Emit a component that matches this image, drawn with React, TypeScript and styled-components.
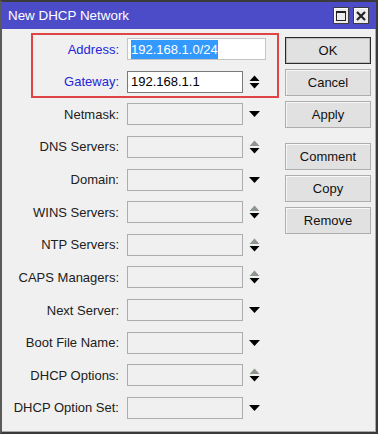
import React from "react";
import styled, { createGlobalStyle } from "styled-components";

const Global = createGlobalStyle`
  html, body { margin: 0; padding: 0; background: #f0f0f0; }
  body { font-family: "Liberation Sans", Arial, sans-serif; }
  * { box-sizing: border-box; }
`;

const Window = styled.div`
  width: 378px;
  height: 434px;
  border: 2px solid #3a3a3a;
  border-left-color: #5a5a5a;
  display: flex;
  flex-direction: column;
  background: #f0f0f0;
  overflow: hidden;
`;

const TitleBar = styled.div`
  height: 27px;
  flex: none;
  background: #4c4cc9;
  display: flex;
  align-items: center;
  padding: 0 7px 0 6px;
`;

const Title = styled.div`
  flex: 1;
  color: #ffffff;
  font-size: 13.4px;
  line-height: 1;
`;

const TitleButtons = styled.div`
  display: flex;
  gap: 4px;
`;

const TitleButton = styled.div`
  width: 16px;
  height: 17px;
  background: #ececec;
  border: 1px solid #3c3c3c;
  box-shadow: inset 1px 1px 0 #ffffff;
  display: flex;
  align-items: center;
  justify-content: center;
`;

const Body = styled.div`
  position: relative;
  flex: 1;
  display: flex;
  align-items: flex-start;
  padding-top: 9px;
  border-right: 1px solid #a8a8a8;
  border-bottom: 1px solid #a8a8a8;
`;

const Form = styled.div`
  display: flex;
  flex-direction: column;
  gap: 10.64px;
`;

const Row = styled.div`
  display: grid;
  grid-template-columns: 125px 116px 23px;
  height: 22px;
  align-items: center;
`;

const Label = styled.div<{ $accent?: boolean }>`
  text-align: right;
  padding-right: 8px;
  font-size: 13px;
  color: ${(p) => (p.$accent ? "#2424d8" : "#202020")};
  white-space: nowrap;
`;

const Field = styled.div<{ $filled?: boolean; $wide?: boolean; $dark?: boolean }>`
  height: 22px;
  grid-column: ${(p) => (p.$wide ? "2 / span 2" : "2")};
  background: ${(p) => (p.$filled ? "#ffffff" : "#f0f0f0")};
  border: 1px solid ${(p) => (p.$dark ? "#7a7a7a" : p.$filled ? "#c4c4c4" : "#adadad")};
  font-size: 13px;
  color: #000;
  display: flex;
  align-items: center;
  padding-left: 3px;
  white-space: nowrap;
  overflow: hidden;
`;

const Selected = styled.span`
  background: #3399ff;
  color: #ffffff;
  padding: 2px 0;
`;

const IconCell = styled.div`
  display: flex;
  align-items: center;
  justify-content: center;
  padding-right: 1px;
`;

const Buttons = styled.div`
  margin-left: 19px;
  margin-top: -1px;
  display: flex;
  flex-direction: column;
  gap: 5px;
  width: 86px;
`;

const Button = styled.div<{ $default?: boolean; $spaced?: boolean }>`
  height: 27px;
  margin-top: ${(p) => (p.$spaced ? "10px" : "0")};
  background: #e1e1e1;
  border: 1px solid ${(p) => (p.$default ? "#2a2a2a" : "#adadad")};
  box-shadow: ${(p) => (p.$default ? "inset 0 0 0 1px #bdbdbd" : "inset 1px 1px 0 #f8f8f8")};
  display: flex;
  align-items: center;
  justify-content: center;
  font-size: 13px;
  color: #111;
`;

const Highlight = styled.div`
  position: absolute;
  left: 29px;
  top: 4px;
  width: 248px;
  height: 65px;
  border: 2px solid #e04444;
  pointer-events: none;
`;

const DropIcon = () => (
  <svg width="11" height="6" viewBox="0 0 11 6">
    <polygon points="0,0 11,0 5.5,6" fill="#000" />
  </svg>
);

const SpinIcon = ({ active }: { active?: boolean }) => (
  <svg width="11" height="14" viewBox="0 0 11 14">
    <polygon points="0.5,6 10.5,6 5.5,0.5" fill={active ? "#000" : "#8d978d"} />
    <polygon points="0.5,8 10.5,8 5.5,13.5" fill="#000" />
  </svg>
);

const MaxIcon = () => (
  <svg width="10" height="10" viewBox="0 0 10 10">
    <rect x="0.5" y="0.5" width="9" height="9" fill="none" stroke="#222" strokeWidth="1" />
    <rect x="0" y="0" width="10" height="2" fill="#222" />
  </svg>
);

const CloseIcon = () => (
  <svg width="10" height="10" viewBox="0 0 10 10">
    <path d="M1 1 L9 9 M9 1 L1 9" stroke="#222" strokeWidth="2.2" />
  </svg>
);

type Kind = "drop" | "spin";
const rows: { label: string; kind: Kind }[] = [
  { label: "Netmask:", kind: "drop" },
  { label: "DNS Servers:", kind: "spin" },
  { label: "Domain:", kind: "drop" },
  { label: "WINS Servers:", kind: "spin" },
  { label: "NTP Servers:", kind: "spin" },
  { label: "CAPS Managers:", kind: "spin" },
  { label: "Next Server:", kind: "drop" },
  { label: "Boot File Name:", kind: "drop" },
  { label: "DHCP Options:", kind: "spin" },
  { label: "DHCP Option Set:", kind: "drop" },
];

export default function App() {
  return (
    <>
      <Global />
      <Window>
        <TitleBar>
          <Title>New DHCP Network</Title>
          <TitleButtons>
            <TitleButton>
              <MaxIcon />
            </TitleButton>
            <TitleButton>
              <CloseIcon />
            </TitleButton>
          </TitleButtons>
        </TitleBar>
        <Body>
          <Form>
            <Row>
              <Label $accent>Address:</Label>
              <Field $filled $wide>
                <Selected>192.168.1.0/24</Selected>
              </Field>
            </Row>
            <Row>
              <Label $accent>Gateway:</Label>
              <Field $filled $dark>
                192.168.1.1
              </Field>
              <IconCell>
                <SpinIcon active />
              </IconCell>
            </Row>
            {rows.map((r) => (
              <Row key={r.label}>
                <Label>{r.label}</Label>
                <Field />
                <IconCell>{r.kind === "drop" ? <DropIcon /> : <SpinIcon />}</IconCell>
              </Row>
            ))}
          </Form>
          <Buttons>
            <Button $default>OK</Button>
            <Button>Cancel</Button>
            <Button>Apply</Button>
            <Button $spaced>Comment</Button>
            <Button>Copy</Button>
            <Button>Remove</Button>
          </Buttons>
          <Highlight />
        </Body>
      </Window>
    </>
  );
}
